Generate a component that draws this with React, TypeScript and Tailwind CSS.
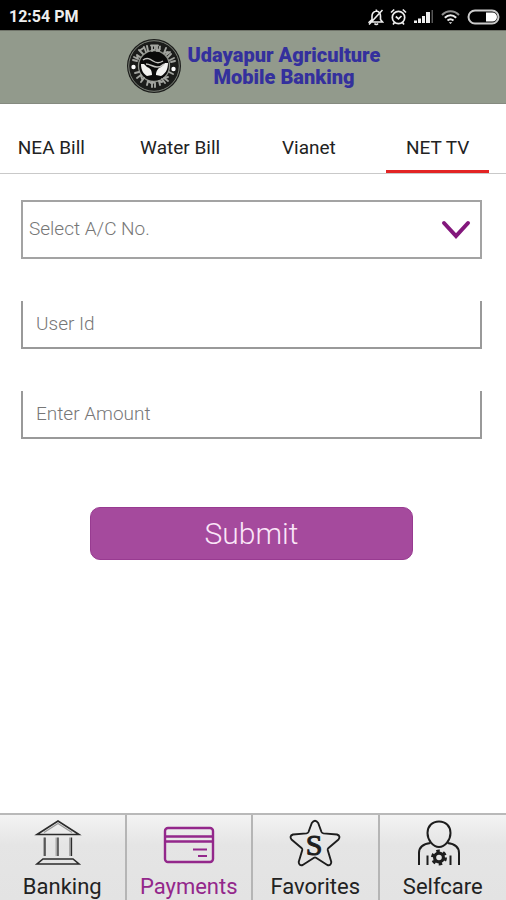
import { useState } from "react";
import type { InputHTMLAttributes, ReactNode } from "react";

const billTabs = ["NEA Bill", "Water Bill", "Vianet", "NET TV"];

function StatusBar() {
  return (
    <div className="flex h-[30px] items-center justify-between bg-black pt-[3px] pr-[5px] pl-[9px] text-[#eee]">
      <span className="text-base font-bold">12:54 PM</span>
      <div className="flex items-center">
        <svg className="mr-[6px]" width="16" height="18" viewBox="0 0 16 18" fill="none" stroke="currentColor" strokeWidth="1.6">
          <path d="M1.5 14h13l-2-2.5V8c0-3-1.5-4.500-4-5-2.500.5-4.500 2-4.500 5v3.500zM6.500 15.500c1 1.300 2.500 1.300 3.500 0M8.300 3V1.500M1 16.500L14.500 2" />
        </svg>
        <svg className="mr-[7px]" width="17" height="18" viewBox="0 0 17 18" fill="none" stroke="currentColor" strokeWidth="1.7">
          <circle cx="8.500" cy="9.500" r="6.200" />
          <path d="M1 4.500L4.200 1.500M16 4.500L12.800 1.500M5.800 8.500l2.700 2.300L11.500 8M4.500 14.500L3 16.500M12.500 14.500L14 16.500" />
        </svg>
        <svg className="mr-[7px]" width="20" height="15" viewBox="0 0 20 15" fill="currentColor">
          <path d="M0 11.500h3V14H0zM4 9.500h3V14H4zM8 7h3v7H8zM12 3h4v11h-4z" />
          <path d="M17.500 1h1.500v13h-1.500z" fill="#555" />
        </svg>
        <svg className="mr-[7px]" width="19" height="14" viewBox="0 0 19 14" fill="none" stroke="currentColor" strokeWidth="2">
          <path d="M1 5c5-5 12-5 17 0" opacity=".6" />
          <path d="M3.800 7.800c3.500-3.300 8-3.300 11.400 0M6.500 10.600c2-1.700 4-1.700 6 0" />
          <path d="M7.800 12.200h3.400L9.500 14z" fill="currentColor" stroke="none" />
        </svg>
        <svg width="34" height="16" viewBox="0 0 34 16">
          <rect x="1.500" y="1.500" width="30" height="13" rx="6.500" fill="none" stroke="#ccc" strokeWidth="2" />
          <path d="M19 3.500h6.500a4.500 4.500 0 010 9H19z" fill="#fff" />
        </svg>
      </div>
    </div>
  );
}

function BankLogo() {
  return (
    <svg className="shrink-0" width="56" height="56" viewBox="0 0 56 56" fill="none">
      <circle cx="28" cy="28" r="27" fill="#1b1c1a" />
      <circle cx="28" cy="28" r="25.300" stroke="#7d8279" />
      <circle cx="28" cy="28" r="15.500" fill="#0a0a0a" stroke="#8d9089" strokeWidth="1.300" />
      {/* lettering round the rim */}
      <g stroke="#a3a5a0" strokeWidth="1.900" strokeLinecap="round" strokeLinejoin="round">
        <path d="M7 22l4 1M8 19l4 2-1-4 3 2M13 12l4 4M14.500 12l3-2M18 9l2 5M21 8l1 5" />
        <path d="M25 7.500h7M26 8v5l3-2v-3M31 8v5l3-2M34 8.500l-1 4.500M40 10l-2 5 4-1M44 14l-4 3M45 16l-3 3M48 20l-4 2M49 23l-4 1" />
        <path d="M9 35l4-1M11 40l4-3 1 4M15 44l3-4M21 47l1-4 3 2M26 49v-5l3 1v4M34 47l-1-4 3 1M39 45l-3-4M42 43l-4-3 4-1M47 36l-4-2" />
      </g>
      <circle cx="7.500" cy="29" r="2.200" fill="#fff" />
      <circle cx="47.500" cy="31" r="2.200" fill="#fff" />
      <path d="M15 26c0 7 3 10 6 12l5-1c0-5-2-7-5-8l-3-3zM42 25c0 7-3 11-7 13l-5-1c0-4 2-7 5-8l4-4z" fill="#f2f2f0" />
      <path d="M17 22c4-3 7-1 10 1s7 2 10 0M20 26c4 0 7 3 11 3 3 0 5-1 7-3" stroke="#c4c4c0" strokeWidth="1.500" />
    </svg>
  );
}

function BrandHeader() {
  return (
    <header className="flex h-[74px] justify-center border-t border-b border-t-[#6f7369] border-b-[#858a80] bg-[#929a8c] pt-[7px]">
      <div className="flex gap-[6px]">
        <BankLogo />
        <h1 className="pt-[6px] text-center text-[20px] leading-[22px] font-black text-[#34309d]">
          Udayapur Agriculture
          <br />
          Mobile Banking
        </h1>
      </div>
    </header>
  );
}

function BillTabs() {
  const [active, setActive] = useState("NET TV");
  return (
    <nav className="grid h-[70px] grid-cols-4 gap-[26px] border-b border-[#c9c9c9] pr-[17px]">
      {billTabs.map((tab) => (
        <button
          key={tab}
          type="button"
          onClick={() => setActive(tab)}
          className={`border-b-[3px] pt-[22px] text-[19px] leading-[24px] whitespace-nowrap text-[#222] ${
            active === tab ? "border-[#e32424]" : "border-transparent"
          }`}
        >
          {tab}
        </button>
      ))}
    </nav>
  );
}

function Field({ label, ...props }: { label: string } & InputHTMLAttributes<HTMLInputElement>) {
  return (
    <input
      aria-label={label}
      placeholder={label}
      className="h-[48px] w-full border-2 border-t-0 border-[#999] px-[13px] pb-[2px] text-[19px] font-light outline-none placeholder:text-[#777]"
      {...props}
    />
  );
}

function PaymentForm() {
  return (
    <form className="flex flex-col pt-[26px] pr-[24px] pl-[21px]" onSubmit={(e) => e.preventDefault()}>
      <div className="relative">
        <select
          aria-label="Select A/C No."
          className="h-[59px] w-full appearance-none border-2 border-[#a3a3a3] bg-white px-[6px] text-[19px] font-light text-[#777] outline-none"
        >
          <option>Select A/C No.</option>
        </select>
        <svg
          className="pointer-events-none absolute top-5 right-[11px]"
          width="30"
          height="20"
          viewBox="0 0 30 20"
          fill="none"
          stroke="#83177c"
          strokeWidth="4"
          strokeLinecap="round"
        >
          <path d="M3 3l12 13L27 3" />
        </svg>
      </div>
      <div className="mt-[42px] flex flex-col gap-[42px]">
        <Field label="User Id" />
        <Field label="Enter Amount" inputMode="decimal" />
      </div>
      <button
        type="submit"
        className="mx-[69px] mt-[68px] h-[53px] rounded-[10px] border border-[#983b91] bg-[#a54a9d] text-[30px] font-light text-[#fae6f8]"
      >
        Submit
      </button>
    </form>
  );
}

function BankIcon() {
  return (
    <svg className="mr-2" width="48" height="50" viewBox="0 0 48 50" fill="none" stroke="#2b2b2b" strokeWidth="1.600">
      <path d="M10 13.500L24 4.500l14 9" stroke="#999" strokeWidth="1.300" />
      <path d="M3 15.500L24 2l21 13.500z" />
      <path d="M10 18.500v18.500M22.500 18.500v18.500M36 18.500v18.500" stroke="#aaa" strokeWidth="2" />
      <path d="M11 18.500v18.500M24 18.500v18.500M37.500 18.500v18.500" strokeWidth="1.300" />
      <path d="M9 40h30l6 5H3z" />
    </svg>
  );
}

function CardIcon() {
  return (
    <svg width="52" height="50" viewBox="0 0 52 50" fill="none" stroke="#93278b" strokeWidth="2.400">
      <rect x="2" y="9" width="48" height="34" rx="3" />
      <path d="M2 17.500h48M2 22.500h48" />
      <path d="M30 30.500h14M35 37h9" strokeWidth="2" />
    </svg>
  );
}

function StarIcon() {
  return (
    <svg width="52" height="50" viewBox="0 0 52 50">
      <path
        d="M22.800 4q3.200-4.500 6.400 0l3.300 9Q33 14.200 34.500 14.400L48 15.500q4 1.500 1.500 5L39.500 29q-1 1-.8 2l3.600 12q-.3 4-4 3L27 38.800q-1-.6-2 0L13.700 46q-3.700 1-4-3l3.600-12q.2-1-.8-2L2.500 20.500q-2.500-3.500 1.500-5L17.500 14.400Q19 14.200 19.500 13z"
        fill="none"
        stroke="#1d1d1d"
        strokeWidth="1.900"
        strokeLinejoin="round"
      />
      <text
        x="25"
        y="36"
        textAnchor="middle"
        fontFamily="Liberation Serif, serif"
        fontSize="30"
        fill="#1d1d1d"
        stroke="#1d1d1d"
        strokeWidth="1"
      >
        S
      </text>
    </svg>
  );
}

function SelfcareIcon() {
  return (
    <svg className="mr-2" width="44" height="50" viewBox="0 0 44 50" fill="none" stroke="#1d1d1d" strokeWidth="2">
      <path d="M22 2.500c7 0 11.500 5 11.500 11.500C33.500 21 28 28 22 28s-11.500-7-11.500-14C10.500 7.500 15 2.500 22 2.500z" />
      <path d="M2 46V34c0-6 4-9 11.500-10M42 46V34c0-6-4-9-11.500-10M10.500 36.500V46M33.500 36.500V46" />
      <circle cx="22" cy="38.500" r="4.400" strokeWidth="3.200" />
      <circle cx="22" cy="38.500" r="6.500" strokeWidth="3" strokeDasharray="3.403" />
    </svg>
  );
}

function NavItem({ icon, label, active = false }: { icon: ReactNode; label: string; active?: boolean }) {
  return (
    <a
      href="#"
      className={`flex flex-col items-center gap-[5px] border-r-2 border-[#b5b5b5] pt-1 last:border-r-0 ${
        active ? "text-[#93278b]" : "text-[#222]"
      }`}
    >
      {icon}
      <span className="text-[22px] leading-[26px]">{label}</span>
    </a>
  );
}

export default function App() {
  return (
    <div className="flex min-h-screen flex-col bg-white font-['Roboto','Liberation_Sans',sans-serif]">
      <StatusBar />
      <BrandHeader />
      <main>
        <BillTabs />
        <PaymentForm />
      </main>
      <nav className="mt-auto grid grid-cols-4 border-t-2 border-[#b9b9b9] bg-linear-to-b from-[#f3f3f3] via-[#e5e5e5] via-35% to-[#e3e3e3]">
        <NavItem icon={<BankIcon />} label="Banking" />
        <NavItem icon={<CardIcon />} label="Payments" active />
        <NavItem icon={<StarIcon />} label="Favorites" />
        <NavItem icon={<SelfcareIcon />} label="Selfcare" />
      </nav>
    </div>
  );
}
